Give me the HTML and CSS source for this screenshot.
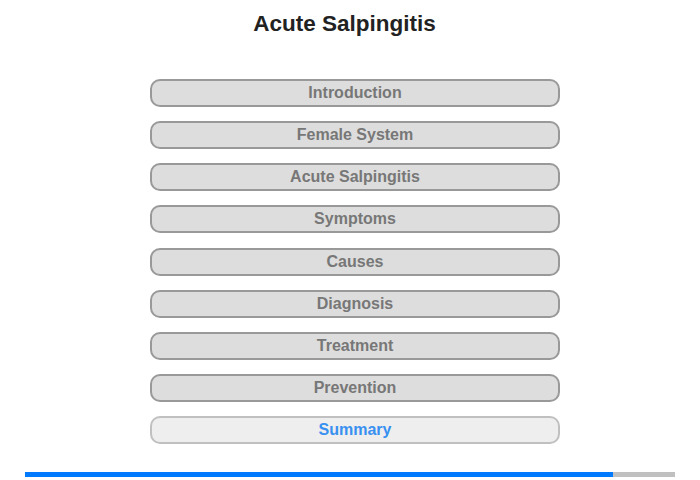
FILE: index.html
```html
<!DOCTYPE html>
<html lang="en">
<head>
    <meta charset="UTF-8">
    <meta name="viewport" content="width=device-width, initial-scale=1.0">
    <title>Acute Salpingitis</title>
    <link rel="stylesheet" href="styles.css">
</head>
<body>
    <h1>Acute Salpingitis</h1>

    <div class="menu">
        <button class="menu-item">Introduction</button>
        <button class="menu-item">Female System</button>
        <button class="menu-item">Acute Salpingitis</button>
        <button class="menu-item">Symptoms</button>
        <button class="menu-item">Causes</button>
        <button class="menu-item">Diagnosis</button>
        <button class="menu-item">Treatment</button>
        <button class="menu-item">Prevention</button>
        <button class="menu-item current">Summary</button>
    </div>

    <div class="progress">
        <div class="progress-fill" style="width: 90.5%;"></div>
    </div>
</body>
</html>
```

FILE: styles.css
```css
body {
    font-family: "Liberation Sans", Arial, sans-serif;
    margin: 0;
    width: 700px;
    height: 480px;
}
h1 {
    color: #222;
    font-size: 22.5px;
    line-height: 25px;
    text-align: center;
    margin: 0;
    padding: 11px 11px 0 0;
}
.menu {
    display: flex;
    flex-direction: column;
    gap: 14.125px;
    width: 410px;
    margin: 43px 0 0 150px;
}
.menu-item {
    font-family: inherit;
    font-size: 16px;
    font-weight: bold;
    color: #777;
    background-color: #ddd;
    border: 2px solid #999;
    border-radius: 10px;
    height: 28px;
    padding: 0;
    box-sizing: border-box;
    text-align: center;
    line-height: 24px;
}
.menu-item.current {
    color: #3890f0;
    background-color: #eee;
    border-color: #c0c0c0;
}
.progress {
    margin: 28px 25px 0 25px;
    height: 5px;
    background-color: #c0c0c0;
}
.progress-fill {
    height: 100%;
    background-color: #007bff;
}
```
